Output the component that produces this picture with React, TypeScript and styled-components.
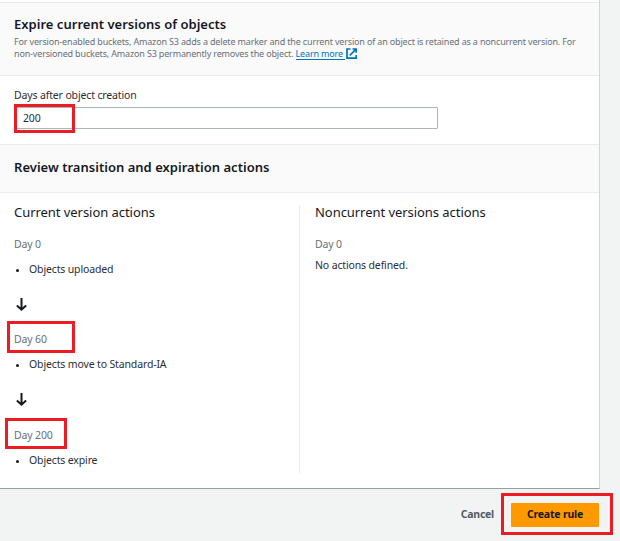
import React from "react";
import styled, { createGlobalStyle } from "styled-components";

const GlobalStyle = createGlobalStyle`
  * { box-sizing: border-box; }
  html, body { margin: 0; padding: 0; background: #f2f3f3; }
  body {
    font-family: "Noto Sans", "Open Sans", sans-serif;
    font-size: 10.5px;
    letter-spacing: -0.14px;
    color: #2a2e35;
    overflow: hidden;
  }
`;

const Page = styled.main`
  width: 620px;
  height: 541px;
  display: flex;
  flex-direction: column;
`;

const Panel = styled.section`
  width: 600px;
  height: 489px;
  padding-top: 2px;
  background: #fff;
  border-right: 1px solid #d2d6d6;
  border-bottom: 1px solid #949f9f;
`;

const SectionHeader = styled.header<{ $height: number; $top: number }>`
  height: ${(p) => p.$height}px;
  padding: ${(p) => p.$top}px 14px 0;
  background: #fafafa;
  border-top: 1px solid #eaeded;
  border-bottom: 1px solid #eaeded;
`;

const Title = styled.h2`
  margin: 0;
  color: #16191f;
  font-size: 13px;
  font-weight: 600;
  line-height: 20px;
  letter-spacing: 0.02px;
`;

const Description = styled.p`
  margin: 2px 0 0;
  color: #687078;
  font-size: 9px;
  line-height: 12px;
  letter-spacing: -0.165px;
  white-space: nowrap;
`;

const LearnMore = styled.a`
  display: inline-block;
  height: 12px;
  color: #0073bb;
  text-decoration: none;
  border-bottom: 1px solid #0073bb;
  padding-right: 2px;
`;

const ExternalSvg = styled.svg`
  width: 11px;
  height: 11px;
  margin-left: 1px;
  vertical-align: -2px;
`;

const Field = styled.div`
  height: 68px;
  padding: 11px 14px 0;
`;

const Label = styled.label`
  display: block;
  height: 20px;
  line-height: 16px;
`;

const InputFrame = styled.div`
  position: relative;
  width: 424px;
  height: 22px;
`;

const Input = styled.input`
  display: block;
  width: 100%;
  height: 100%;
  padding: 0 8px;
  border: 1px solid #aab7b8;
  border-radius: 1px;
  background: #fff;
  color: #2a2e35;
  font: inherit;
  letter-spacing: inherit;
  outline: none;
`;

const Highlight = styled.span<{ $top: number; $left: number; $width: number; $height: number }>`
  position: absolute;
  top: ${(p) => p.$top}px;
  left: ${(p) => p.$left}px;
  width: ${(p) => p.$width}px;
  height: ${(p) => p.$height}px;
  border: 3px solid #ed1c24;
  pointer-events: none;
`;

const Columns = styled.div`
  display: grid;
  grid-template-columns: 285px 1fr;
  height: 281px;
  padding: 12px 0 0 14px;
`;

const Column = styled.div<{ $divided?: boolean }>`
  height: 268px;
  padding-left: ${(p) => (p.$divided ? 15 : 0)}px;
  border-left: ${(p) => (p.$divided ? "1px solid #eaeded" : "0")};
`;

const ColumnTitle = styled.h3`
  margin: 0 0 19px;
  color: #16191f;
  font-size: 13px;
  font-weight: 400;
  line-height: 14px;
  letter-spacing: -0.05px;
`;

const Day = styled.div`
  position: relative;
  width: max-content;
  line-height: 12px;
  color: #687078;
`;

const Actions = styled.ul`
  margin: 13px 0 0;
  padding: 0;
  list-style: none;
`;

const Action = styled.li`
  display: flex;
  align-items: center;
  gap: 10px;
  line-height: 12px;

  &::before {
    content: "";
    width: 3px;
    height: 3px;
    margin: 2px 0 0 2px;
    border-radius: 50%;
    background: #16191f;
  }
`;

const NoActions = styled.p`
  margin: 9px 0 0;
  line-height: 12px;
`;

const ArrowSvg = styled.svg<{ $after: number }>`
  display: block;
  width: 12px;
  height: 14px;
  margin: 23px 0 ${(p) => p.$after}px 2px;
`;

const Footer = styled.footer`
  display: flex;
  justify-content: flex-end;
  align-items: flex-start;
  gap: 17px;
  padding: 14px 21px 0 0;
`;

const Cancel = styled.button`
  padding: 0;
  border: 0;
  background: none;
  color: #545b64;
  font: inherit;
  font-weight: 700;
  letter-spacing: -0.25px;
  line-height: 22px;
`;

const PrimaryWrap = styled.div`
  position: relative;
`;

const Primary = styled.button`
  display: block;
  width: 88px;
  height: 24px;
  padding: 0 0 2px;
  border: 0;
  border-radius: 1px;
  background: #ff9900;
  color: #16191f;
  font: inherit;
  font-weight: 700;
  letter-spacing: -0.2px;
`;

const ExternalIcon = () => (
  <ExternalSvg viewBox="0 0 11 11" fill="none" stroke="#0073bb" strokeWidth="1.7">
    <path d="M4.5 1H1v9.2h9.2V7M6.5 1h3.7v3.7M10 1.2L3.7 7.5" />
  </ExternalSvg>
);

const DownArrow = ({ after }: { after: number }) => (
  <ArrowSvg $after={after} viewBox="0 0 12 14" fill="none" stroke="#16191f" strokeWidth="2">
    <path d="M5.5 0v12M0.9 7.4l4.6 4.3 4.6-4.3" />
  </ArrowSvg>
);

export default function App() {
  return (
    <>
      <GlobalStyle />
      <Page>
        <Panel>
          <SectionHeader $height={74} $top={11}>
            <Title>Expire current versions of objects</Title>
            <Description>
              For version-enabled buckets, Amazon S3 adds a delete marker and the current version of an
              object is retained as a noncurrent version. For
              <br />
              non-versioned buckets, Amazon S3 permanently removes the object.{" "}
              <LearnMore>Learn more</LearnMore>
              <ExternalIcon />
            </Description>
          </SectionHeader>
          <Field>
            <Label htmlFor="days">Days after object creation</Label>
            <InputFrame>
              <Input id="days" defaultValue="200" />
              <Highlight $top={-3} $left={0} $width={61} $height={29} />
            </InputFrame>
          </Field>
          <SectionHeader $height={49} $top={12}>
            <Title>Review transition and expiration actions</Title>
          </SectionHeader>
          <Columns>
            <Column>
              <ColumnTitle>Current version actions</ColumnTitle>
              <Day>Day 0</Day>
              <Actions>
                <Action>Objects uploaded</Action>
              </Actions>
              <DownArrow after={21} />
              <Day>
                Day 60
                <Highlight $top={-12} $left={-7} $width={68} $height={32} />
              </Day>
              <Actions>
                <Action>Objects move to Standard-IA</Action>
              </Actions>
              <DownArrow after={22} />
              <Day>
                Day 200
                <Highlight $top={-11} $left={-9} $width={62} $height={31} />
              </Day>
              <Actions>
                <Action>Objects expire</Action>
              </Actions>
            </Column>
            <Column $divided>
              <ColumnTitle>Noncurrent versions actions</ColumnTitle>
              <Day>Day 0</Day>
              <NoActions>No actions defined.</NoActions>
            </Column>
          </Columns>
        </Panel>
        <Footer>
          <Cancel>Cancel</Cancel>
          <PrimaryWrap>
            <Primary>Create rule</Primary>
            <Highlight $top={-10} $left={-10} $width={112} $height={42} />
          </PrimaryWrap>
        </Footer>
      </Page>
    </>
  );
}
